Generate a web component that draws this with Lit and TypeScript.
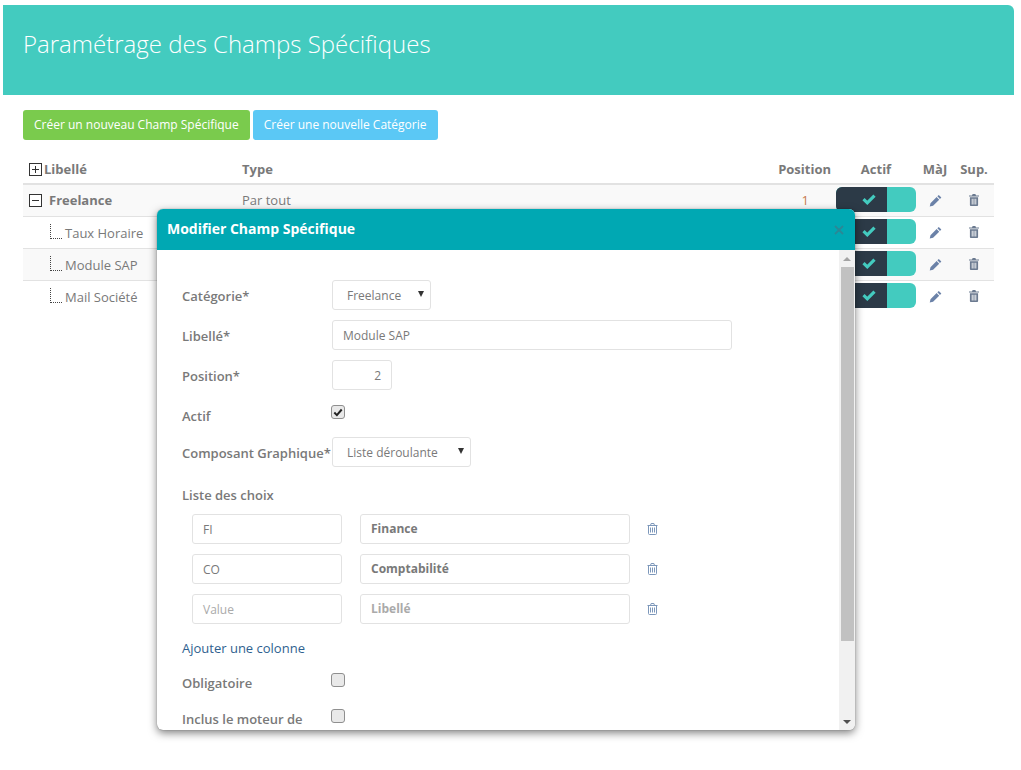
import { LitElement, html, css, svg } from "lit";
import { customElement } from "lit/decorators.js";

const pencil = html`<svg class="ic" width="13" height="13" viewBox="0 0 14 14"><path fill="#6b82a8" d="M10.500 1l2.800 2.800-1.500 1.500L9 2.500zM8.200 3.300L11 6.100l-6.600 6.600L.8 13.500l.8-3.600z"/></svg>`;
const trashFilled = html`<svg class="ic" width="10" height="12" viewBox="0 0 11 13"><path fill="#6b7a90" fill-rule="evenodd" d="M4 0h3l.7 1.500H11v1.200H0V1.500h3.300zM1 3.500h9V12a1 1 0 0 1-1 1H2a1 1 0 0 1-1-1zM3 5v6.500h1V5zm2 0v6.500h1V5zm2 0v6.500h1V5z"/></svg>`;
const trashLine = html`<svg class="ic" width="11" height="12" viewBox="0 0 11 12"><path fill="none" stroke="#7c97ba" d="M.5 2.500h10M3.500 2.500l.6-2h2.800l.6 2M1.500 2.500v8a1 1 0 0 0 1 1h6a1 1 0 0 0 1-1v-8M3.500 4.500v5M5.500 4.500v5M7.500 4.500v5"/></svg>`;
const check = html`<svg width="14" height="11" viewBox="0 0 14 11"><path fill="none" stroke="#43cbbf" stroke-width="3.200" d="M1.500 5.200l3.800 3.600 7.200-7.200"/></svg>`;
const plusBox = (plus: boolean) => html`<svg class="box" width="13" height="13" viewBox="0 0 13 13"><rect x=".5" y=".5" width="12" height="12" fill="#fff" stroke="#333"/>${svg`<path d="M3 6.500h7" stroke="#333"/>`}${plus ? svg`<path d="M6.500 3v7" stroke="#333"/>` : ""}</svg>`;
const tree = html`<span class="tree"></span>`;

const rows = [
  { name: "Freelance", type: "Par tout", pos: "1", top: true },
  { name: "Taux Horaire", type: "", pos: "", top: false },
  { name: "Module SAP", type: "", pos: "", top: false },
  { name: "Mail Société", type: "", pos: "", top: false },
];
const choices = [
  { v: "FI", l: "Finance", ph: false },
  { v: "CO", l: "Comptabilité", ph: false },
  { v: "Value", l: "Libellé", ph: true },
];

@customElement("app-root")
export class AppRoot extends LitElement {
  static styles = css`
    :host { display: block; height: 770px; position: relative; overflow: hidden; background: #fff; font-family: "Open Sans", sans-serif; font-size: 13px; color: #797979; }
    .banner { margin: 5px 7px 0 3px; height: 90px; box-sizing: border-box; background: #43cbbf; border-radius: 0 6px 0 0; padding: 23px 20px 0; color: #fff; font-size: 24px; font-weight: 300; line-height: 32px; }
    .actions { display: flex; gap: 3px; padding: 15px 0 0 23px; }
    .btn { height: 30px; box-sizing: border-box; border-radius: 3px; color: #fff; font-size: 12px; line-height: 30px; padding: 0 11px; }
    .green { background: #7acb4d; }
    .blue { background: #5bc8f5; }
    .table { margin: 15px 27px 0 23px; }
    .row { display: grid; grid-template-columns: 219px 1fr 80px 80px 38px 40px; align-items: center; height: 30px; padding-bottom: 1px; border-bottom: 1px solid #e2e2e2; }
    .row:last-child { border-bottom: 0; }
    .row.head { height: 28px; padding-bottom: 0; border-bottom: 2px solid #e2e2e2; font-weight: 700; }
    .row.odd { background: #f9f9f9; }
    .first { display: flex; align-items: center; padding-left: 6px; }
    .head .first span { padding-left: 2px; }
    .box { flex: none; }
    .num { text-align: right; padding-right: 5px; }
    .pos { color: #c77c50; padding-right: 27px; }
    .c { display: flex; justify-content: center; text-align: center; }
    .name { padding-left: 7px; font-weight: 700; }
    .child { padding: 2px 0 0 27px; }
    .tree { flex: none; width: 12px; height: 15px; margin: -4px 3px 0 0; border-left: 1px dotted #444; border-bottom: 1px dotted #444; box-sizing: border-box; }
    .toggle { display: flex; width: 80px; height: 25px; margin-top: -1px; border-radius: 6px; overflow: hidden; background: #43cbbf; }
    .toggle span { width: 51px; background: #2c3a47; display: flex; align-items: center; justify-content: flex-end; padding-right: 11px; box-sizing: border-box; }
    .modal { position: absolute; left: 157px; top: 209px; width: 698px; height: 521px; background: #fff; border-radius: 6px; box-shadow: 0 3px 9px rgba(0,0,0,.5), 0 0 1px rgba(0,0,0,.5); display: flex; flex-direction: column; overflow: hidden; }
    .mhead { flex: none; height: 41px; box-sizing: border-box; padding: 0 11px 2px 10px; background: #00a8b3; color: #fff; font-weight: 700; font-size: 14px; display: flex; align-items: center; justify-content: space-between; }
    .mhead svg { display: block; margin-top: 2px; }
    .mbody { flex: 1; min-height: 0; display: flex; }
    .form { flex: 1; min-width: 0; overflow: hidden; padding: 30px 0 0 25px; }
    .f { display: flex; align-items: center; height: 30px; margin-bottom: 10px; font-weight: 600; }
    .f label { width: 150px; flex: none; padding-top: 2px; }
    .in { height: 30px; box-sizing: border-box; border: 1px solid #e2e2e2; border-radius: 3px; padding: 0 10px; font-size: 12px; line-height: 30px; color: #797979; background: #fff; font-weight: 400; }
    .sel { display: flex; justify-content: space-between; align-items: center; padding: 2px 6px 0 14px; }
    .arrow { width: 0; height: 0; border: 3.500px solid transparent; border-top: 6px solid #333; border-bottom: 0; margin-top: -4px; }
    .chk { flex: none; width: 12px; height: 12px; border: 1px solid #8f8f8f; border-radius: 3px; background: #e9e9e9; display: flex; align-items: center; justify-content: center; margin: -6px 0 0 -1px; }
    .lst { font-weight: 600; line-height: 18px; margin: 19px 0 10px; }
    .ch { display: flex; align-items: center; gap: 18px; margin: 0 0 10px 10px; }
    .ch .a { width: 150px; }
    .ch .b { width: 270px; font-weight: 700; line-height: 27px; }
    .ph { color: #aaa; }
    .ch svg { margin-left: -1px; }
    .link { color: #2f5f8f; line-height: 18px; margin: 15px 0 0; }
    .f.low { margin: 8px 0 0; height: 36px; }
    .f.low + .f.low { margin-top: 0; }
    .f.low label { padding-top: 0; }
    .sb { flex: none; width: 16px; background: #f1f1f1; display: flex; flex-direction: column; align-items: center; }
    .sbtn { flex: none; height: 17px; display: flex; align-items: center; justify-content: center; }
    .up { width: 0; height: 0; border: 4px solid transparent; border-bottom: 4px solid #a3a3a3; border-top: 0; }
    .dn { width: 0; height: 0; border: 4px solid transparent; border-top: 4px solid #505050; border-bottom: 0; }
    .thumb { flex: none; width: 13px; height: 374px; background: #c1c1c1; }
    .gap { flex: 1; }
  `;

  render() {
    return html`
      <div class="banner">Paramétrage des Champs Spécifiques</div>
      <div class="actions">
        <div class="btn green">Créer un nouveau Champ Spécifique</div>
        <div class="btn blue">Créer une nouvelle Catégorie</div>
      </div>
      <div class="table">
        <div class="row head">
          <div class="first">${plusBox(true)}<span>Libellé</span></div>
          <div>Type</div><div class="num">Position</div><div class="c">Actif</div><div class="c">MàJ</div><div class="c">Sup.</div>
        </div>
        ${rows.map((r, i) => html`
          <div class="row ${i % 2 === 0 ? "odd" : ""}">
            ${r.top
              ? html`<div class="first">${plusBox(false)}<span class="name">${r.name}</span></div>`
              : html`<div class="first child">${tree}<span>${r.name}</span></div>`}
            <div>${r.type}</div>
            <div class="num pos">${r.pos}</div>
            <div class="c"><div class="toggle"><span>${check}</span></div></div>
            <div class="c">${pencil}</div>
            <div class="c">${trashFilled}</div>
          </div>`)}
      </div>
      <div class="modal">
        <div class="mhead">
          <span>Modifier Champ Spécifique</span>
          <svg width="10" height="10" viewBox="0 0 10 10"><path d="M1 1l8 8M9 1L1 9" stroke="#2a8896" stroke-width="1.800"/></svg>
        </div>
        <div class="mbody">
          <div class="form">
            <div class="f"><label>Catégorie*</label><div class="in sel" style="width:99px">Freelance<i class="arrow"></i></div></div>
            <div class="f"><label>Libellé*</label><div class="in" style="width:400px">Module SAP</div></div>
            <div class="f"><label>Position*</label><div class="in" style="width:60px;text-align:right">2</div></div>
            <div class="f"><label>Actif</label><div class="chk"><svg width="10" height="9" viewBox="0 0 10 9"><path d="M1.300 4.500l2.600 2.600L8.700 1.500" fill="none" stroke="#222" stroke-width="2"/></svg></div></div>
            <div class="f" style="margin-top:-3px"><label>Composant Graphique*</label><div class="in sel" style="width:139px">Liste déroulante<i class="arrow"></i></div></div>
            <div class="lst">Liste des choix</div>
            ${choices.map(c => html`
              <div class="ch">
                <div class="in a ${c.ph ? "ph" : ""}">${c.v}</div>
                <div class="in b ${c.ph ? "ph" : ""}">${c.l}</div>
                ${trashLine}
              </div>`)}
            <div class="link">Ajouter une colonne</div>
            <div class="f low"><label>Obligatoire</label><div class="chk"></div></div>
            <div class="f low"><label>Inclus le moteur de</label><div class="chk"></div></div>
          </div>
          <div class="sb">
            <div class="sbtn"><i class="up"></i></div>
            <div class="thumb"></div>
            <div class="gap"></div>
            <div class="sbtn"><i class="dn"></i></div>
          </div>
        </div>
      </div>
    `;
  }
}
